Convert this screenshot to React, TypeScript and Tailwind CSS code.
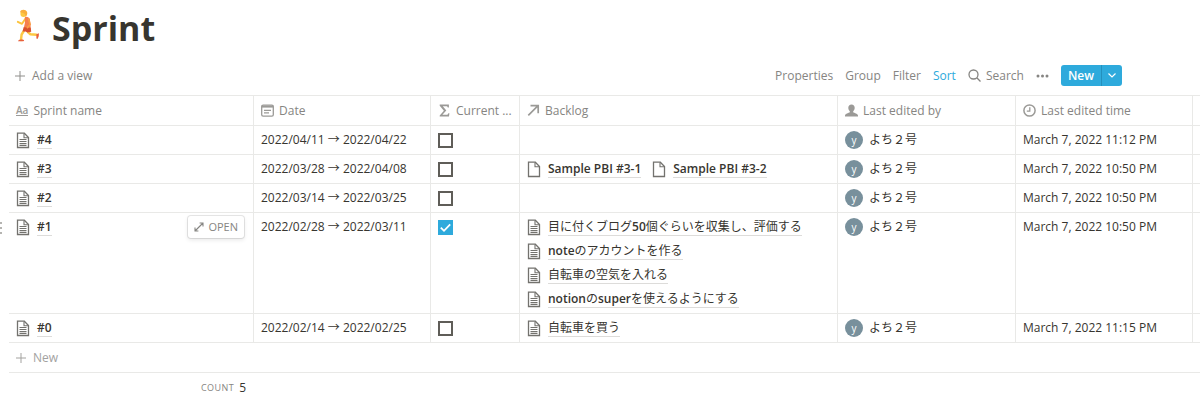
import type { ReactNode } from "react";

type Backlog = { title: string; empty?: boolean };
type Sprint = {
  name: string;
  date: string;
  current?: boolean;
  backlog: Backlog[];
  edited: string;
  hovered?: boolean;
};

const SPRINTS: Sprint[] = [
  { name: "#4", date: "2022/04/11 → 2022/04/22", backlog: [], edited: "March 7, 2022 11:12 PM" },
  {
    name: "#3",
    date: "2022/03/28 → 2022/04/08",
    backlog: [
      { title: "Sample PBI #3-1", empty: true },
      { title: "Sample PBI #3-2", empty: true },
    ],
    edited: "March 7, 2022 10:50 PM",
  },
  { name: "#2", date: "2022/03/14 → 2022/03/25", backlog: [], edited: "March 7, 2022 10:50 PM" },
  {
    name: "#1",
    date: "2022/02/28 → 2022/03/11",
    current: true,
    hovered: true,
    backlog: [
      { title: "目に付くブログ50個ぐらいを収集し、評価する" },
      { title: "noteのアカウントを作る" },
      { title: "自転車の空気を入れる" },
      { title: "notionのsuperを使えるようにする" },
    ],
    edited: "March 7, 2022 10:50 PM",
  },
  {
    name: "#0",
    date: "2022/02/14 → 2022/02/25",
    backlog: [{ title: "自転車を買う" }],
    edited: "March 7, 2022 11:15 PM",
  },
];

function Runner() {
  return (
    <svg viewBox="0 0 24 34" className="mb-1 h-[34px] w-6 shrink-0" aria-hidden="true">
      <path d="M9.500 9.500 6 14.800 1.800 12.800" fill="none" stroke="#fcc33c" strokeWidth="1.900" strokeLinecap="round" strokeLinejoin="round" />
      <path d="M7.800 22 5.600 25.500 5 31" fill="none" stroke="#fdc843" strokeWidth="2.400" strokeLinecap="round" strokeLinejoin="round" />
      <path d="M12 23 14.200 25.200 20.500 25.800" fill="none" stroke="#fdc843" strokeWidth="2.500" strokeLinecap="round" strokeLinejoin="round" />
      <path d="M2 32.200C2.500 30.600 4 30.600 6.700 30.600 8.600 31 8.400 32.300 7.200 32.300H2z" fill="#e8603c" />
      <path d="M20.400 25.300 22.900 24.200C23 26.500 22.400 28.500 21.500 30L20.400 29.600z" fill="#e8603c" />
      <path d="M8.900 8.100C10.500 7.200 13.400 8.200 13.900 10.200L14.800 19.500 7.800 19 8.900 14z" fill="#f57f50" />
      <path d="M7.600 18.300 14.800 18.800 15.200 22.800 11.400 23.400 9.500 22.600 6.600 22.600z" fill="#d9502f" />
      <path d="M12.600 10 14.200 15.500 11.400 18.600" fill="none" stroke="#fa9d44" strokeWidth="1.600" strokeLinecap="round" strokeLinejoin="round" />
      <circle cx="7.600" cy="4.700" r="3.200" fill="#fdc843" />
      <path d="M4 3.200C4.300.600 7.900.100 9.900 1.500 12.100 3.100 11.500 6.600 9.500 7.300 9.700 5.300 8.200 3.600 4 3.200z" fill="#f9ae3b" />
    </svg>
  );
}

function Plus({ className }: { className: string }) {
  return (
    <svg viewBox="0 0 12 12" className={className} aria-hidden="true">
      <path d="M6 1v10M1 6h10" stroke="currentColor" strokeWidth="1" />
    </svg>
  );
}

function PageIcon({ empty }: { empty?: boolean }) {
  return (
    <svg viewBox="0 0 14 17" className="h-[17px] w-[14px] shrink-0 text-[#73726e]" fill="none" stroke="currentColor" aria-hidden="true">
      <path d="M1.500 1.200h6.800l4.200 4.300v10H1.500z" strokeWidth="1.300" />
      <path d="M8 1.400v4.300h4.300" strokeWidth="1.100" />
      {!empty && <path d="M3.500 7.500h7M3.500 9.500h7M3.500 11.500h7M3.500 13.400h7" strokeWidth="1.100" />}
    </svg>
  );
}

const ICON = "h-[13px] w-[13px] shrink-0 text-[#9b9a97]";

const COLUMNS: { label: string; icon: ReactNode }[] = [
  {
    label: "Sprint name",
    icon: <span className="border-b border-[#9b9a97] text-[10px] leading-[10px] font-semibold text-[#9b9a97]">Aa</span>,
  },
  {
    label: "Date",
    icon: (
      <svg viewBox="0 0 13 13" className={ICON} fill="none" stroke="currentColor" aria-hidden="true">
        <rect x=".7" y="1.200" width="11.600" height="11" rx="1.400" strokeWidth="1.300" />
        <path d="M.7 2.600h11.600" strokeWidth="2" />
        <path d="M3 6.300h7M3 8.900h5" strokeWidth="1.200" />
      </svg>
    ),
  },
  {
    label: "Current ...",
    icon: (
      <svg viewBox="0 0 13 13" className={ICON} fill="currentColor" aria-hidden="true">
        <path d="M1.700.5h9.200v3H9.800c-.2-1-.6-1.300-1.800-1.300H4.800L8.300 6.400 4.400 10.700h3.800c1.300 0 1.800-.4 2.100-1.500h1.100l-.4 3.300H1.700v-1.100l4.200-4.700-4.200-5z" />
      </svg>
    ),
  },
  {
    label: "Backlog",
    icon: (
      <svg viewBox="0 0 13 13" className={ICON} fill="none" stroke="currentColor" strokeWidth="1.700" aria-hidden="true">
        <path d="M1.300 11.300 10.800 1.800M3.500 1.600h7.700v7.700" />
      </svg>
    ),
  },
  {
    label: "Last edited by",
    icon: (
      <svg viewBox="0 0 13 13" className={ICON} fill="currentColor" aria-hidden="true">
        <path d="M6.500.4c2 0 3.200 1.400 3.200 3.300 0 1.500-.6 2.800-1.500 3.500v1c.9.700 4.500 1.300 4.800 3.200v1.200H0v-1.200c.3-1.900 3.900-2.500 4.800-3.200v-1C3.900 6.500 3.300 5.200 3.300 3.700 3.300 1.800 4.500.4 6.500.4z" />
      </svg>
    ),
  },
  {
    label: "Last edited time",
    icon: (
      <svg viewBox="0 0 13 13" className={ICON} fill="none" stroke="currentColor" aria-hidden="true">
        <circle cx="6.500" cy="6.500" r="5.600" strokeWidth="1.500" />
        <path d="M6.800 3.200v3.900H3.800" strokeWidth="1.300" />
      </svg>
    ),
  },
];

/* Latin runs are set semibold, Japanese runs stay regular. */
function Title({ text }: { text: string }) {
  return (
    <a href="#" className="border-b border-[#dddcda] leading-4 whitespace-nowrap">
      {text.split(/([\x20-\x7e]+)/).map((run, i) =>
        i % 2 ? (
          <span key={i} className="font-semibold">{run}</span>
        ) : (
          run
        ),
      )}
    </a>
  );
}

function Handle() {
  return (
    <svg viewBox="0 0 4 14" className="absolute top-2 -left-[9px] h-[14px] w-1 fill-[#b5b4b1]" aria-hidden="true">
      <path d="M0 1h2v2H0zM0 6h2v2H0zM0 11h2v2H0z" />
    </svg>
  );
}

const CELL = "border-r border-b border-[#e9e9e7] p-0 align-top font-normal";

export default function App() {
  return (
    <main className="overflow-hidden bg-white pl-[9px] font-['Open_Sans','Noto_Sans_CJK_JP',sans-serif] text-xs text-[#37352f]">
      <header className="flex h-14 items-center gap-3 pl-[7px]">
        <Runner />
        <h1 className="text-[34px] leading-10 font-bold">Sprint</h1>
      </header>

      <div className="flex h-[39px] items-center justify-between pr-[78px] pl-[5px] text-[#868582]">
        <button type="button" className="flex items-center gap-[6px]">
          <Plus className="h-3 w-3 text-[#8f8e8b]" />
          Add a view
        </button>
        <div className="flex items-center gap-3">
          <button type="button">Properties</button>
          <button type="button">Group</button>
          <button type="button">Filter</button>
          <button type="button" className="text-[#2eaadc]">Sort</button>
          <button type="button" className="flex items-center gap-[5px]">
            <svg viewBox="0 0 13 13" className="h-[13px] w-[13px]" fill="none" stroke="currentColor" strokeWidth="1.300" aria-hidden="true">
              <circle cx="5.500" cy="5.500" r="4.500" />
              <path d="m8.800 8.800 3.700 3.700" />
            </svg>
            Search
          </button>
          <button type="button" aria-label="More">
            <svg viewBox="0 0 13 4" className="h-1 w-[13px] fill-current" aria-hidden="true">
              <circle cx="2" cy="2" r="1.500" />
              <circle cx="6.500" cy="2" r="1.500" />
              <circle cx="11" cy="2" r="1.500" />
            </svg>
          </button>
          <div className="flex h-[21px] overflow-hidden rounded-[3px] bg-[#2eaadc] text-white">
            <button type="button" className="border-r border-[#2490bd] px-[7px] font-semibold">New</button>
            <button type="button" aria-label="New options" className="px-[6px]">
              <svg viewBox="0 0 8 5" className="h-[5px] w-2" fill="none" stroke="currentColor" strokeWidth="1.200" aria-hidden="true">
                <path d="m.5.500 3.500 3.500L7.500.500" />
              </svg>
            </button>
          </div>
        </div>
      </div>

      <table className="w-full table-fixed border-separate border-spacing-0 border-t border-[#e9e9e7] text-left">
        <colgroup>
          <col className="w-[245px]" />
          <col className="w-[177px]" />
          <col className="w-[89px]" />
          <col className="w-[318px]" />
          <col className="w-[178px]" />
          <col className="w-[177px]" />
          <col />
        </colgroup>
        <thead>
          <tr>
            {COLUMNS.map((c) => (
              <th key={c.label} scope="col" className={CELL}>
                <div className="flex h-[29px] items-center gap-[5px] px-[7px] whitespace-nowrap text-[#868582]">
                  {c.icon}
                  {c.label}
                </div>
              </th>
            ))}
            <td className="border-b border-[#e9e9e7] p-0" />
          </tr>
        </thead>
        <tbody>
          {SPRINTS.map((s) => (
            <tr key={s.name}>
              <td className={CELL}>
                <div className="relative flex h-7 items-center gap-[7px] pr-[9px] pl-[7px]">
                  {s.hovered && <Handle />}
                  <PageIcon />
                  <Title text={s.name} />
                  {s.hovered && (
                    <button
                      type="button"
                      className="ml-auto flex h-[22px] items-center gap-1 rounded-[3px] bg-white px-[6px] text-[11px] text-[#868582] shadow-[0_0_0_1px_rgba(15,15,15,0.1),0_2px_4px_rgba(15,15,15,0.1)]"
                    >
                      <svg viewBox="0 0 10 10" className="h-[10px] w-[10px]" fill="none" stroke="currentColor" strokeWidth="1.100" aria-hidden="true">
                        <path d="M1 9 9 1M5.600 1H9v3.400M1 5.600V9h3.400" />
                      </svg>
                      OPEN
                    </button>
                  )}
                </div>
              </td>
              <td className={CELL}>
                <div className="flex h-7 items-center px-[7px] whitespace-nowrap">{s.date}</div>
              </td>
              <td className={CELL}>
                <label className="relative flex h-7 items-center px-[7px]">
                  <input
                    type="checkbox"
                    aria-label={`${s.name} is current`}
                    defaultChecked={s.current}
                    className="peer h-[15px] w-[15px] appearance-none border-2 border-[#5f5d58] checked:border-[#2eaadc] checked:bg-[#2eaadc]"
                  />
                  <svg viewBox="0 0 15 15" className="pointer-events-none absolute left-[7px] hidden h-[15px] w-[15px] peer-checked:block" fill="none" stroke="white" strokeWidth="1.800" aria-hidden="true">
                    <path d="m2.800 7.600 3.200 3.200 6.200-6.400" />
                  </svg>
                </label>
              </td>
              <td className={CELL}>
                {s.backlog.length > 0 && (
                  <ul className="flex flex-wrap gap-x-[11px] px-[7px] py-[2px]">
                    {s.backlog.map((b) => (
                      <li key={b.title} className={b.empty ? "flex h-6 items-center gap-[7px]" : "flex h-6 w-full items-center gap-[7px]"}>
                        <PageIcon empty={b.empty} />
                        <Title text={b.title} />
                      </li>
                    ))}
                  </ul>
                )}
              </td>
              <td className={CELL}>
                <div className="flex h-7 items-center gap-[6px] px-[7px]">
                  <span className="flex h-[18px] w-[18px] items-center justify-center rounded-full bg-[#78909c] text-[10px] leading-none text-white">y</span>
                  よち２号
                </div>
              </td>
              <td className={CELL}>
                <div className="flex h-7 items-center px-[7px] whitespace-nowrap">{s.edited}</div>
              </td>
              <td className="border-b border-[#e9e9e7] p-0" />
            </tr>
          ))}
        </tbody>
        <tfoot>
          <tr>
            <td colSpan={7} className="border-b border-[#e9e9e7] p-0">
              <button type="button" className="flex h-[29px] w-full items-center gap-[6px] pl-[6px] text-[#a3a29f]">
                <Plus className="h-3 w-3" />
                New
              </button>
            </td>
          </tr>
          <tr>
            <td className="p-0">
              <div className="flex h-[29px] items-center justify-end gap-[5px] pr-[8px]">
                <span className="text-[9px] tracking-wider text-[#868582]">COUNT</span>
                <span>5</span>
              </div>
            </td>
            <td colSpan={6} />
          </tr>
        </tfoot>
      </table>
    </main>
  );
}
